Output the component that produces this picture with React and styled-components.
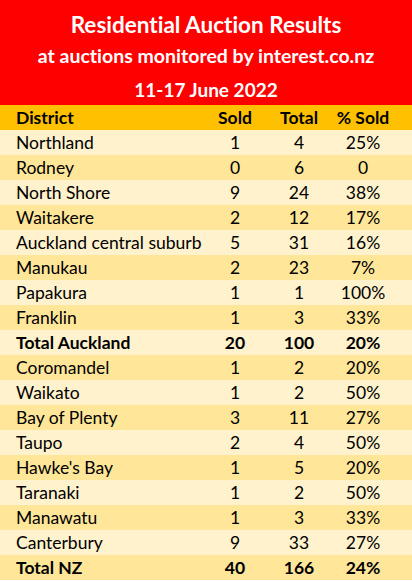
import styled, { createGlobalStyle } from 'styled-components';

const GlobalStyle = createGlobalStyle`
  html, body {
    margin: 0;
    padding: 0;
    background: #ffffff;
  }
  body {
    font-family: Lato, "Open Sans", sans-serif;
    font-variant-ligatures: none;
  }
`;

const Wrapper = styled.div`
  width: 412px;
  height: 581px;
  overflow: hidden;
`;

const Banner = styled.div`
  height: 105px;
  background: #ff0000;
  color: #ffffff;
  font-weight: 700;
  text-align: center;
  display: flex;
  flex-direction: column;
  align-items: center;
  padding-top: 12px;
  box-sizing: border-box;
`;

const Title = styled.div`
  font-size: 22.5px;
  line-height: 26px;
`;

const Subtitle = styled.div`
  font-size: 19.5px;
  line-height: 24px;
  margin-top: 6px;
`;

const Dates = styled.div`
  font-size: 19px;
  line-height: 24px;
  margin-top: 10px;
`;

const Row = styled.div`
  display: grid;
  grid-template-columns: 1fr 64px 64px 64px;
  align-items: center;
  height: 25px;
  padding: 0 17px 0 16px;
  font-size: 17.5px;
  color: #000000;
  background: ${p => (p.$head ? '#ffc000' : p.$shade ? '#ffe699' : '#fff2cc')};
  font-weight: ${p => (p.$bold ? 700 : 400)};
`;

const Name = styled.span`
  white-space: nowrap;
  overflow: hidden;
`;

const Num = styled.span`
  text-align: center;
`;

const rows = [
  ['Northland', 1, 4, '25%'],
  ['Rodney', 0, 6, '0'],
  ['North Shore', 9, 24, '38%'],
  ['Waitakere', 2, 12, '17%'],
  ['Auckland central suburb', 5, 31, '16%'],
  ['Manukau', 2, 23, '7%'],
  ['Papakura', 1, 1, '100%'],
  ['Franklin', 1, 3, '33%'],
  ['Total Auckland', 20, 100, '20%', true],
  ['Coromandel', 1, 2, '20%'],
  ['Waikato', 1, 2, '50%'],
  ['Bay of Plenty', 3, 11, '27%'],
  ['Taupo', 2, 4, '50%'],
  ["Hawke's Bay", 1, 5, '20%'],
  ['Taranaki', 1, 2, '50%'],
  ['Manawatu', 1, 3, '33%'],
  ['Canterbury', 9, 33, '27%'],
  ['Total NZ', 40, 166, '24%', true],
];

export default function App() {
  return (
    <Wrapper>
      <GlobalStyle />
      <Banner>
        <Title>Residential Auction Results</Title>
        <Subtitle>at auctions monitored by interest.co.nz</Subtitle>
        <Dates>11-17 June 2022</Dates>
      </Banner>
      <Row $head $bold>
        <Name>District</Name>
        <Num>Sold</Num>
        <Num>Total</Num>
        <Num>% Sold</Num>
      </Row>
      {rows.map(([name, sold, total, pct, bold], i) => (
        <Row key={name} $shade={i % 2 === 1} $bold={bold}>
          <Name>{name}</Name>
          <Num>{sold}</Num>
          <Num>{total}</Num>
          <Num>{pct}</Num>
        </Row>
      ))}
    </Wrapper>
  );
}
